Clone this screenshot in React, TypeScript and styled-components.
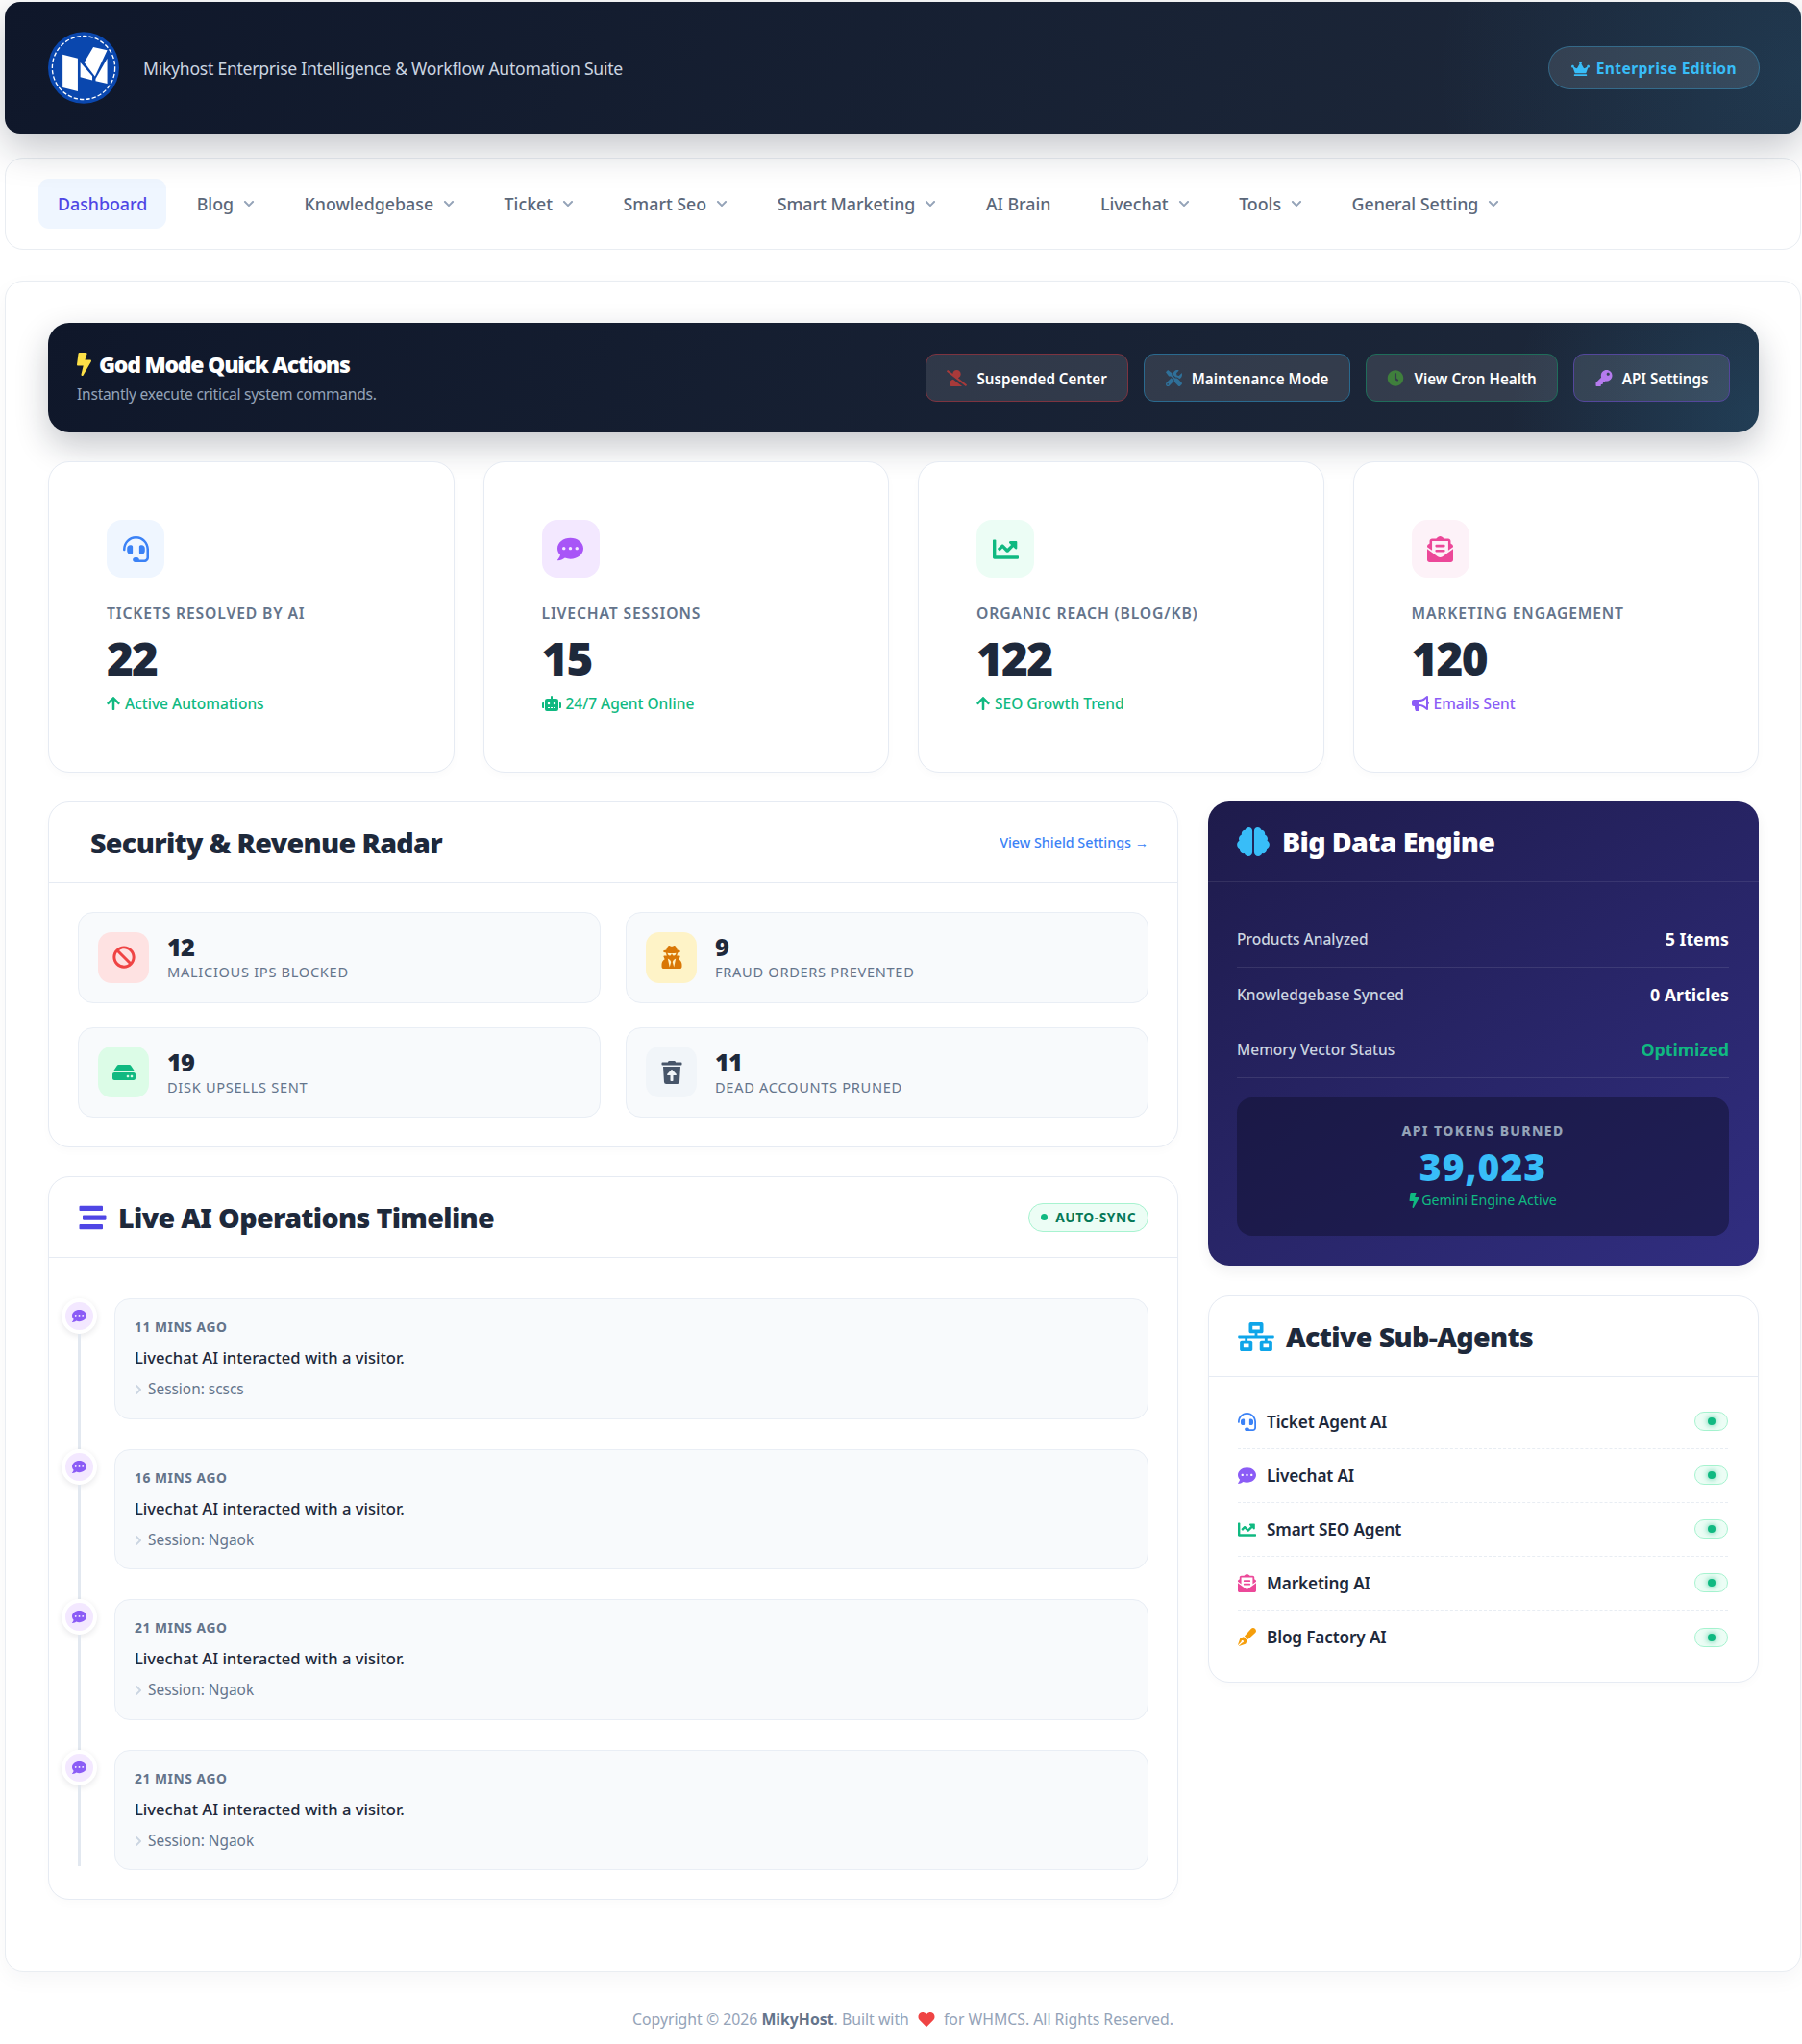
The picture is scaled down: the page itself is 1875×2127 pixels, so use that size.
import React from "react";
import styled, { createGlobalStyle } from "styled-components";
import {
  FaArrowUp, FaBan, FaBolt, FaBrain, FaBullhorn, FaChartLine, FaChevronDown, FaChevronRight,
  FaClock, FaCommentDots, FaCrown, FaEnvelopeOpenText, FaHdd, FaHeadset, FaHeart, FaKey,
  FaNetworkWired, FaPenFancy, FaRobot, FaStream, FaTools, FaTrashRestore, FaUserSecret, FaUserSlash,
} from "react-icons/fa";

const Global = createGlobalStyle`
  html, body { margin: 0; background: #fff; }
  body {
    padding: 2px 1px 0 5px;
    font-family: "Noto Sans", "Open Sans", "Liberation Sans", sans-serif;
    color: #1e293b;
  }
  * { box-sizing: border-box; }
`;

const Page = styled.div`
  display: flex;
  flex-direction: column;
  height: 2125px;
`;

const Header = styled.header`
  position: relative;
  z-index: 2;
  height: 137px;
  flex: none;
  padding: 0 43px 0 45px;
  display: flex;
  align-items: center;
  border-radius: 16px;
  background: radial-gradient(circle at 100% 55%, rgba(56, 189, 248, 0.11), transparent 380px),
    linear-gradient(120deg, #0f172a, #1e293b);
  box-shadow: 0 14px 40px rgba(15, 23, 42, 0.26);
`;

const Logo = styled.svg`
  width: 74px;
  height: 75px;
  flex: none;
`;

const Tagline = styled.div`
  margin-left: 25px;
  font-size: 17.6px;
  letter-spacing: -0.26px;
  color: #cbd5e1;
  flex: 1;
`;

const EditionBadge = styled.div`
  display: flex;
  align-items: center;
  gap: 7px;
  height: 45px;
  padding: 1px 23px 0;
  border-radius: 23px;
  border: 1.5px solid rgba(56, 189, 248, 0.32);
  background: rgba(255, 255, 255, 0.1);
  color: #38bdf8;
  font-size: 15.6px;
  font-weight: 700;
  letter-spacing: 0.4px;
`;

const Nav = styled.nav`
  margin-top: 25px;
  height: 96px;
  flex: none;
  padding: 0 20px 0 34px;
  display: flex;
  align-items: center;
  gap: 11.5px;
  border: 1.5px solid #e9edf2;
  border-radius: 19px;
  background: #fff;
`;

const NavItem = styled.a<{ $active?: boolean }>`
  display: flex;
  align-items: center;
  gap: 10px;
  height: 52px;
  padding: 0 20px;
  border-radius: 11px;
  font-size: 17.8px;
  font-weight: 500;
  color: ${(p) => (p.$active ? "#4f46e5" : "#5b6779")};
  background: ${(p) => (p.$active ? "#eff6ff" : "transparent")};
  svg { width: 12px; height: 12px; color: #94a3b8; }
`;

const Panel = styled.main`
  margin-top: 32px;
  height: 1760px;
  flex: none;
  padding: 43px 43px 0 44px;
  border: 1.5px solid #e9edf2;
  border-radius: 19px;
  background: #fff;
  box-shadow: 0 8px 22px rgba(15, 23, 42, 0.04);
  display: flex;
  flex-direction: column;
`;

const Banner = styled.section`
  height: 114px;
  flex: none;
  padding: 0 30px;
  display: flex;
  align-items: center;
  justify-content: space-between;
  border-radius: 22px;
  background: radial-gradient(circle at 100% 90%, rgba(56, 189, 248, 0.14), transparent 260px),
    linear-gradient(120deg, #0f172a, #1e293b);
  box-shadow: 0 14px 34px rgba(15, 23, 42, 0.24);
`;

const BannerTitle = styled.h2`
  margin: -2px 0 0;
  display: flex;
  align-items: center;
  gap: 8px;
  font-size: 23px;
  line-height: 32px;
  font-weight: 900;
  letter-spacing: -1.25px;
  color: #fff;
  svg { color: #fde047; width: 15px; height: 24px; }
`;

const BannerSub = styled.p`
  margin: 4px 0 0;
  font-size: 15.6px;
  line-height: 22px;
  letter-spacing: -0.25px;
  color: #94a3b8;
`;

const ActionRow = styled.div`
  display: flex;
  gap: 16px;
`;

const ActionButton = styled.button<{ $border: string; $icon: string; $iconW: number }>`
  display: flex;
  align-items: center;
  gap: 10px;
  height: 50px;
  padding: 2px 21.5px 0;
  border-radius: 11px;
  font: 600 15.2px "Noto Sans", sans-serif;
  color: #fff;
  background: rgba(255, 255, 255, 0.11);
  border: 1.5px solid ${(p) => p.$border};
  svg { color: ${(p) => p.$icon}; width: ${(p) => p.$iconW}px; height: 17px; margin-top: -2px; }
`;

const StatGrid = styled.section`
  margin-top: 30px;
  flex: none;
  display: grid;
  grid-template-columns: repeat(4, 1fr);
  gap: 30px;
`;

const Card = styled.div`
  border: 1.5px solid #e6ebf3;
  border-radius: 22px;
  background: #fff;
  box-shadow: 0 4px 10px rgba(15, 23, 42, 0.02);
`;

const StatCard = styled(Card)`
  height: 324px;
  padding: 60px 60px 0;
`;

const StatIcon = styled.div<{ $bg: string; $color: string }>`
  width: 60px;
  height: 60px;
  border-radius: 16px;
  display: flex;
  align-items: center;
  justify-content: center;
  background: ${(p) => p.$bg};
  color: ${(p) => p.$color};
  font-size: 27px;
`;

const StatLabel = styled.div`
  margin-top: 26px;
  font-size: 15.7px;
  line-height: 22px;
  font-weight: 600;
  letter-spacing: 0.85px;
  text-transform: uppercase;
  color: #64748b;
`;

const StatValue = styled.div`
  margin-top: 7px;
  font-size: 47.6px;
  line-height: 58px;
  font-weight: 900;
  letter-spacing: -1.8px;
  color: #1e293b;
`;

const StatTrend = styled.div<{ $color: string; $iconW: number }>`
  margin-top: 7px;
  display: flex;
  align-items: center;
  gap: 5px;
  font-size: 15.5px;
  line-height: 22px;
  font-weight: 500;
  color: ${(p) => p.$color};
  svg { width: ${(p) => p.$iconW}px; height: 16px; }
`;

const Columns = styled.div`
  margin-top: 30px;
  display: grid;
  grid-template-columns: minmax(0, 1fr) 573px;
  gap: 31px;
  align-items: start;
`;

const Column = styled.div<{ $gap: number }>`
  display: flex;
  flex-direction: column;
  gap: ${(p) => p.$gap}px;
`;

const CardHead = styled.div`
  height: 84px;
  padding: 0 30px;
  display: flex;
  align-items: center;
  justify-content: space-between;
  border-bottom: 1.5px solid #e6ebf3;
`;

const Title = styled.h3`
  margin: 0;
  display: flex;
  align-items: center;
  font-size: 28.6px;
  font-weight: 900;
  letter-spacing: -0.65px;
  color: #1e293b;
`;

const TitleIcon = styled.span<{ $color: string; $gap: number; $w: number; $h: number }>`
  display: flex;
  margin-right: ${(p) => p.$gap}px;
  color: ${(p) => p.$color};
  svg { width: ${(p) => p.$w}px; height: ${(p) => p.$h}px; }
`;

const SecurityTitle = styled(Title)`
  margin-left: 13px;
`;

const HeadLink = styled.a`
  font-size: 14.3px;
  font-weight: 500;
  color: #3b82f6;
`;

const RadarGrid = styled.div`
  padding: 30px 30px 30px;
  display: grid;
  grid-template-columns: 1fr 1fr;
  column-gap: 26px;
  row-gap: 25px;
`;

const RadarCell = styled.div`
  height: 94.5px;
  padding: 0 20px;
  display: flex;
  align-items: center;
  gap: 19px;
  border: 1.5px solid #e9eef5;
  border-radius: 16px;
  background: #f8fafc;
`;

const RadarIcon = styled.div<{ $bg: string; $color: string }>`
  width: 53px;
  height: 53px;
  flex: none;
  border-radius: 14px;
  display: flex;
  align-items: center;
  justify-content: center;
  background: ${(p) => p.$bg};
  color: ${(p) => p.$color};
  font-size: 24px;
`;

const RadarText = styled.div`
  margin-top: -1px;
`;

const RadarValue = styled.div`
  font-size: 25.4px;
  line-height: 32px;
  font-weight: 900;
  letter-spacing: -1px;
  color: #1e293b;
`;

const RadarLabel = styled.div`
  font-size: 14.6px;
  line-height: 21px;
  letter-spacing: 0.7px;
  text-transform: uppercase;
  color: #64748b;
`;

const SyncBadge = styled.div`
  display: flex;
  align-items: center;
  gap: 8px;
  height: 30px;
  padding: 0 12px;
  border-radius: 15px;
  border: 1.5px solid #a7f3d0;
  background: #ecfdf5;
  color: #047857;
  font-size: 13.8px;
  font-weight: 700;
  letter-spacing: 0.5px;
`;

const SyncDot = styled.i`
  width: 7px;
  height: 7px;
  border-radius: 50%;
  background: #10b981;
`;

const Timeline = styled.div`
  padding: 42px 30px 30px 13px;
  display: flex;
  flex-direction: column;
`;

const TimelineRow = styled.div`
  display: grid;
  grid-template-columns: 37px minmax(0, 1fr);
  column-gap: 18px;
  padding-bottom: 31px;
  &:last-child { padding-bottom: 0; }
`;

const Rail = styled.div`
  display: flex;
  flex-direction: column;
  align-items: center;
  margin-bottom: -31px;
  ${TimelineRow}:last-child & { margin-bottom: 4px; }
`;

const RailDot = styled.div`
  width: 37px;
  height: 37px;
  flex: none;
  border-radius: 50%;
  border: 4px solid #fff;
  background: #f3e8ff;
  box-shadow: 0 2px 6px rgba(15, 23, 42, 0.1);
  color: #8b5cf6;
  display: flex;
  align-items: center;
  justify-content: center;
  font-size: 15px;
`;

const RailLine = styled.div`
  width: 3px;
  flex: 1;
  background: #e2e8f0;
`;

const EventCard = styled.div`
  height: 125.5px;
  padding: 18px 20px 0;
  border: 1.5px solid #e9eef5;
  border-radius: 16px;
  background: #f8fafc;
`;

const EventTime = styled.div`
  font-size: 13.8px;
  line-height: 22px;
  font-weight: 700;
  letter-spacing: 0.55px;
  color: #64748b;
`;

const EventText = styled.div`
  margin-top: 8px;
  font-size: 16.6px;
  line-height: 26px;
  font-weight: 500;
  color: #1e293b;
`;

const EventMeta = styled.div`
  margin-top: 9px;
  display: flex;
  align-items: center;
  gap: 6px;
  font-size: 15.4px;
  line-height: 22px;
  color: #64748b;
  svg { width: 8px; height: 12px; color: #cbd5e1; }
`;

const EnginePanel = styled.div`
  height: 483px;
  border-radius: 22px;
  color: #fff;
  background: linear-gradient(145deg, #1e1b4b, #312e81);
  box-shadow: 0 6px 14px rgba(15, 23, 42, 0.06);
`;

const EngineHead = styled.div`
  height: 84px;
  padding: 0 30px;
  display: flex;
  align-items: center;
  border-bottom: 1.5px solid rgba(255, 255, 255, 0.09);
`;

const EngineTitle = styled(Title)`
  color: #fff;
`;

const EngineBody = styled.div`
  padding: 31px 31px 0 30px;
`;

const EngineRow = styled.div`
  height: 57.5px;
  display: flex;
  align-items: center;
  justify-content: space-between;
  border-bottom: 1.5px solid rgba(255, 255, 255, 0.1);
`;

const EngineLabel = styled.span`
  font-size: 15.5px;
  font-weight: 500;
  color: #cbd5e1;
`;

const EngineValue = styled.span<{ $color?: string }>`
  font-size: 17.8px;
  font-weight: 700;
  color: ${(p) => p.$color ?? "#fff"};
`;

const TokenBox = styled.div`
  margin-top: 20px;
  height: 144px;
  padding-top: 25px;
  border-radius: 16px;
  background: rgba(15, 15, 45, 0.5);
  text-align: center;
`;

const TokenLabel = styled.div`
  font-size: 14px;
  line-height: 20px;
  font-weight: 800;
  letter-spacing: 1.35px;
  color: #94a3b8;
`;

const TokenValue = styled.div`
  margin-top: 3px;
  font-size: 39px;
  line-height: 48px;
  font-weight: 900;
  letter-spacing: 1px;
  color: #38bdf8;
`;

const TokenStatus = styled.div`
  display: flex;
  justify-content: center;
  align-items: center;
  gap: 2px;
  font-size: 14.2px;
  line-height: 22px;
  color: #10b981;
  svg { width: 11px; height: 16px; }
`;

const AgentList = styled.div`
  padding: 18.5px 31px 0 30px;
  height: 317px;
`;

const AgentRow = styled.div`
  height: 56px;
  display: flex;
  align-items: center;
  border-bottom: 1.5px dashed #e8edf3;
  &:last-child { border-bottom: 0; }
`;

const AgentIcon = styled.span<{ $color: string }>`
  display: flex;
  width: 30px;
  flex: none;
  color: ${(p) => p.$color};
  font-size: 19px;
`;

const AgentName = styled.span`
  flex: 1;
  font-size: 17.2px;
  font-weight: 600;
  letter-spacing: -0.15px;
  color: #1e293b;
`;

const AgentToggle = styled.span`
  width: 35px;
  height: 20px;
  display: flex;
  align-items: center;
  justify-content: center;
  border: 1.5px solid #a7f3d0;
  border-radius: 10px;
  background: #ecfdf5;
`;

const AgentDot = styled.i`
  width: 8px;
  height: 8px;
  border-radius: 50%;
  background: #10b981;
  box-shadow: 0 0 6px rgba(16, 185, 129, 0.8);
`;

const Footer = styled.footer`
  margin-top: 38px;
  display: flex;
  justify-content: center;
  align-items: center;
  font-size: 15.8px;
  line-height: 22px;
  color: #94a3b8;
  b { color: #64748b; font-weight: 700; }
  svg { color: #ef4444; width: 18px; height: 17px; margin: 0 9px; }
`;

const navItems: [string, boolean][] = [
  ["Blog", true], ["Knowledgebase", true], ["Ticket", true], ["Smart Seo", true], ["Smart Marketing", true],
  ["AI Brain", false], ["Livechat", true], ["Tools", true], ["General Setting", true],
];

const actions = [
  { label: "Suspended Center", Icon: FaUserSlash, border: "#7d3440", icon: "#a83a3a", w: 21 },
  { label: "Maintenance Mode", Icon: FaTools, border: "#2a6a8f", icon: "#2f7099", w: 17 },
  { label: "View Cron Health", Icon: FaClock, border: "#1f6d5a", icon: "#3f7f3c", w: 18 },
  { label: "API Settings", Icon: FaKey, border: "#54479c", icon: "#b57bee", w: 18 },
];

const stats = [
  { label: "Tickets Resolved by AI", value: "22", Icon: FaHeadset, bg: "#eff6ff", color: "#3b82f6", TrendIcon: FaArrowUp, iconW: 14, trend: "Active Automations", trendColor: "#10b981" },
  { label: "Livechat Sessions", value: "15", Icon: FaCommentDots, bg: "#f3e8ff", color: "#a855f7", TrendIcon: FaRobot, iconW: 20, trend: "24/7 Agent Online", trendColor: "#10b981" },
  { label: "Organic Reach (Blog/KB)", value: "122", Icon: FaChartLine, bg: "#ecfdf5", color: "#10b981", TrendIcon: FaArrowUp, iconW: 14, trend: "SEO Growth Trend", trendColor: "#10b981" },
  { label: "Marketing Engagement", value: "120", Icon: FaEnvelopeOpenText, bg: "#fdf2f8", color: "#ec4899", TrendIcon: FaBullhorn, iconW: 18, trend: "Emails Sent", trendColor: "#8b5cf6" },
];

const radar = [
  { value: "12", label: "Malicious IPs Blocked", Icon: FaBan, bg: "#fee2e2", color: "#ef4444" },
  { value: "9", label: "Fraud Orders Prevented", Icon: FaUserSecret, bg: "#fef3c7", color: "#d97706" },
  { value: "19", label: "Disk Upsells Sent", Icon: FaHdd, bg: "#dcfce7", color: "#10b981" },
  { value: "11", label: "Dead Accounts Pruned", Icon: FaTrashRestore, bg: "#f1f5f9", color: "#475569" },
];

const events = [
  { time: "11 MINS AGO", session: "scscs" },
  { time: "16 MINS AGO", session: "Ngaok" },
  { time: "21 MINS AGO", session: "Ngaok" },
  { time: "21 MINS AGO", session: "Ngaok" },
];

const engineRows = [
  { label: "Products Analyzed", value: "5 Items" },
  { label: "Knowledgebase Synced", value: "0 Articles" },
  { label: "Memory Vector Status", value: "Optimized", color: "#10b981" },
];

const agents = [
  { name: "Ticket Agent AI", Icon: FaHeadset, color: "#3b82f6" },
  { name: "Livechat AI", Icon: FaCommentDots, color: "#8b5cf6" },
  { name: "Smart SEO Agent", Icon: FaChartLine, color: "#10b981" },
  { name: "Marketing AI", Icon: FaEnvelopeOpenText, color: "#ec4899" },
  { name: "Blog Factory AI", Icon: FaPenFancy, color: "#f59e0b" },
];

function MikyLogo() {
  return (
    <Logo viewBox="0 0 220 222" aria-label="MikyHost">
      <ellipse cx="110" cy="111" rx="110" ry="111" fill="#0a47ae" />
      <ellipse cx="110" cy="111" rx="97" ry="98" fill="none" stroke="#fff" strokeWidth="4" strokeDasharray="13 6" />
      <g fill="#fff">
        <polygon points="45,70 92,82 92,184 45,172" />
        <polygon points="100,95 137,137 137,150 100,140" />
        <polygon points="140,47 183,57 145,138 112,95" />
        <polygon points="183,82 183,160 147,152 147,145" />
      </g>
    </Logo>
  );
}

export default function App() {
  return (
    <Page>
      <Global />
      <Header>
        <MikyLogo />
        <Tagline>Mikyhost Enterprise Intelligence &amp; Workflow Automation Suite</Tagline>
        <EditionBadge><FaCrown size={19} /> Enterprise Edition</EditionBadge>
      </Header>

      <Nav>
        <NavItem $active>Dashboard</NavItem>
        {navItems.map(([name, caret]) => (
          <NavItem key={name}>{name}{caret && <FaChevronDown />}</NavItem>
        ))}
      </Nav>

      <Panel>
        <Banner>
          <div>
            <BannerTitle><FaBolt /> God Mode Quick Actions</BannerTitle>
            <BannerSub>Instantly execute critical system commands.</BannerSub>
          </div>
          <ActionRow>
            {actions.map(({ label, Icon, border, icon, w }) => (
              <ActionButton key={label} $border={border} $icon={icon} $iconW={w}><Icon />{label}</ActionButton>
            ))}
          </ActionRow>
        </Banner>

        <StatGrid>
          {stats.map(({ label, value, Icon, bg, color, TrendIcon, iconW, trend, trendColor }) => (
            <StatCard key={label}>
              <StatIcon $bg={bg} $color={color}><Icon /></StatIcon>
              <StatLabel>{label}</StatLabel>
              <StatValue>{value}</StatValue>
              <StatTrend $color={trendColor} $iconW={iconW}><TrendIcon />{trend}</StatTrend>
            </StatCard>
          ))}
        </StatGrid>

        <Columns>
          <Column $gap={30}>
            <Card>
              <CardHead>
                <SecurityTitle>Security &amp; Revenue Radar</SecurityTitle>
                <HeadLink>View Shield Settings →</HeadLink>
              </CardHead>
              <RadarGrid>
                {radar.map(({ value, label, Icon, bg, color }) => (
                  <RadarCell key={label}>
                    <RadarIcon $bg={bg} $color={color}><Icon /></RadarIcon>
                    <RadarText>
                      <RadarValue>{value}</RadarValue>
                      <RadarLabel>{label}</RadarLabel>
                    </RadarText>
                  </RadarCell>
                ))}
              </RadarGrid>
            </Card>

            <Card>
              <CardHead>
                <Title>
                  <TitleIcon $color="#4f46e5" $gap={11} $w={31} $h={28}><FaStream /></TitleIcon>
                  Live AI Operations Timeline
                </Title>
                <SyncBadge><SyncDot />AUTO-SYNC</SyncBadge>
              </CardHead>
              <Timeline>
                {events.map((e, i) => (
                  <TimelineRow key={i}>
                    <Rail>
                      <RailDot><FaCommentDots /></RailDot>
                      <RailLine />
                    </Rail>
                    <EventCard>
                      <EventTime>{e.time}</EventTime>
                      <EventText>Livechat AI interacted with a visitor.</EventText>
                      <EventMeta><FaChevronRight />Session: {e.session}</EventMeta>
                    </EventCard>
                  </TimelineRow>
                ))}
              </Timeline>
            </Card>
          </Column>

          <Column $gap={31}>
            <EnginePanel>
              <EngineHead>
                <EngineTitle>
                  <TitleIcon $color="#38bdf8" $gap={13} $w={34} $h={30}><FaBrain /></TitleIcon>
                  Big Data Engine
                </EngineTitle>
              </EngineHead>
              <EngineBody>
                {engineRows.map((r) => (
                  <EngineRow key={r.label}>
                    <EngineLabel>{r.label}</EngineLabel>
                    <EngineValue $color={r.color}>{r.value}</EngineValue>
                  </EngineRow>
                ))}
                <TokenBox>
                  <TokenLabel>API TOKENS BURNED</TokenLabel>
                  <TokenValue>39,023</TokenValue>
                  <TokenStatus><FaBolt />Gemini Engine Active</TokenStatus>
                </TokenBox>
              </EngineBody>
            </EnginePanel>

            <Card>
              <CardHead>
                <Title>
                  <TitleIcon $color="#0ea5e9" $gap={12} $w={38} $h={30}><FaNetworkWired /></TitleIcon>
                  Active Sub-Agents
                </Title>
              </CardHead>
              <AgentList>
                {agents.map(({ name, Icon, color }) => (
                  <AgentRow key={name}>
                    <AgentIcon $color={color}><Icon /></AgentIcon>
                    <AgentName>{name}</AgentName>
                    <AgentToggle><AgentDot /></AgentToggle>
                  </AgentRow>
                ))}
              </AgentList>
            </Card>
          </Column>
        </Columns>
      </Panel>

      <Footer>
        <span>Copyright © 2026 <b>MikyHost</b>. Built with</span>
        <FaHeart />
        <span>for WHMCS. All Rights Reserved.</span>
      </Footer>
    </Page>
  );
}
